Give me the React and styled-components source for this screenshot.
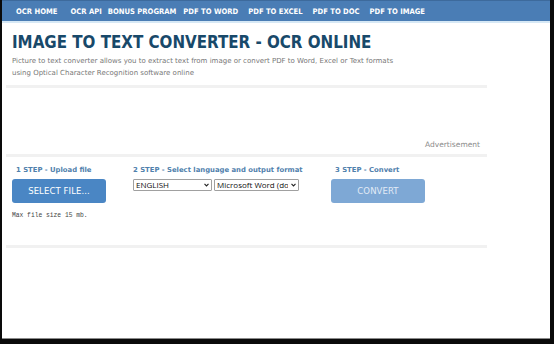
import React from "react";
import styled, { createGlobalStyle } from "styled-components";

const Global = createGlobalStyle`
  html, body { margin: 0; padding: 0; background: #000; }
  body { font-family: "DejaVu Sans", Verdana, sans-serif; }
  * { box-sizing: border-box; }
`;

const Frame = styled.div`
  width: 554px;
  height: 344px;
  background: #0a0a0a;
  padding: 0 4px 5px 2px;
  display: flex;
`;

const Screen = styled.div`
  flex: 1;
  background: #fff;
  border-bottom: 1px solid #8a8a8a;
  display: flex;
  flex-direction: column;
  overflow: hidden;
`;

const Nav = styled.nav`
  height: 23px;
  flex: none;
  background: #4a7db5;
  border-top: 1px solid #3d6a9c;
  border-bottom: 2px solid #d6e8f5;
  display: flex;
  align-items: center;
  padding-left: 14px;
  padding-top: 1px;
`;

const NavLink = styled.a`
  color: #fff;
  font-family: "DejaVu Sans Condensed", "DejaVu Sans", sans-serif;
  font-weight: bold;
  font-size: 7.6px;
  text-decoration: none;
  margin-right: ${(p) => p.$gap || 7}px;
  white-space: nowrap;
`;

const Main = styled.main`
  width: 481px;
  margin-left: 4px;
  display: flex;
  flex-direction: column;
`;

const Header = styled.header`
  padding: 9px 6px 0;
`;

const Title = styled.h1`
  margin: 0;
  font-family: "DejaVu Sans Condensed", "DejaVu Sans", sans-serif;
  font-size: 16.8px;
  line-height: 20px;
  color: #18496a;
  font-weight: bold;
  white-space: nowrap;
`;

const Lead = styled.p`
  margin: 3px 0 0;
  font-size: 7px;
  line-height: 12px;
  color: #777;
  width: 390px;
`;

const AdBox = styled.section`
  margin-top: 6px;
  height: 72px;
  border-top: 3px solid #f1f1f1;
  border-bottom: 3px solid #f1f1f1;
  display: flex;
  align-items: flex-end;
  justify-content: flex-end;
  padding: 0 7px 5px 0;
`;

const AdLabel = styled.span`
  font-size: 7.5px;
  color: #8b8b8b;
`;

const Steps = styled.section`
  height: 91px;
  border-bottom: 3px solid #f1f1f1;
  display: grid;
  grid-template-columns: 121px 198px auto;
  padding: 8px 0 0 6px;
  align-content: start;
`;

const Step = styled.div`
  display: flex;
  flex-direction: column;
`;

const StepLabel = styled.div`
  font-size: 6.85px;
  font-weight: bold;
  color: #4f80ac;
  line-height: 10px;
  padding-left: ${(p) => p.$indent || 0}px;
  white-space: nowrap;
  margin-bottom: 4px;
`;

const Button = styled.button`
  width: 94px;
  height: 24px;
  border: none;
  border-radius: 3px;
  background: ${(p) => (p.$muted ? "#7ea8d5" : "#4a86c4")};
  color: ${(p) => (p.$muted ? "#e2ebf6" : "#fff")};
  font-family: "DejaVu Sans", Verdana, sans-serif;
  font-size: 8.5px;
  letter-spacing: 0.1px;
  cursor: pointer;
`;

const Note = styled.div`
  font-family: "Liberation Mono", monospace;
  font-size: 6.3px;
  color: #444;
  margin-top: 9px;
`;

const SelectRow = styled.div`
  display: flex;
  gap: 2px;
  align-items: flex-start;
`;

const SelectWrap = styled.div`
  position: relative;
  width: ${(p) => p.$w}px;
  height: 12px;
  display: flex;
`;

const Select = styled.select`
  appearance: none;
  -webkit-appearance: none;
  width: 100%;
  height: 12px;
  margin: 0;
  font-family: "Open Sans", "DejaVu Sans", sans-serif;
  font-size: 8px;
  line-height: 10px;
  padding: 0 10px 0 2px;
  border: 1px solid #a0a0a0;
  border-radius: 1px;
  background: #fff;
  color: #111;
  overflow: hidden;
  white-space: nowrap;
`;

const Chevron = styled.svg`
  position: absolute;
  right: 3px;
  top: 50%;
  margin-top: -2px;
  width: 5px;
  height: 4px;
  pointer-events: none;
`;

const navItems = [
  ["OCR HOME", 13],
  ["OCR API", 6],
  ["BONUS PROGRAM", 7],
  ["PDF TO WORD", 10],
  ["PDF TO EXCEL", 10],
  ["PDF TO DOC", 10],
  ["PDF TO IMAGE", 0],
];

function Dropdown({ w, value, children }) {
  return (
    <SelectWrap $w={w}>
      <Select defaultValue={value}>{children}</Select>
      <Chevron viewBox="0 0 5 4">
        <path d="M0.5 0.8 L2.5 2.9 L4.5 0.8" fill="none" stroke="#222" strokeWidth="1.1" />
      </Chevron>
    </SelectWrap>
  );
}

export default function App() {
  return (
    <>
      <Global />
      <Frame>
        <Screen>
          <Nav>
            {navItems.map(([t, g]) => (
              <NavLink key={t} href="#" $gap={g}>
                {t}
              </NavLink>
            ))}
          </Nav>
          <Main>
            <Header>
              <Title>IMAGE TO TEXT CONVERTER - OCR ONLINE</Title>
              <Lead>
                Picture to text converter allows you to extract text from image or convert PDF to Word, Excel or Text formats using Optical Character Recognition software online
              </Lead>
            </Header>
            <AdBox>
              <AdLabel>Advertisement</AdLabel>
            </AdBox>
            <Steps>
              <Step>
                <StepLabel $indent={4}>1 STEP - Upload file</StepLabel>
                <Button>SELECT FILE...</Button>
                <Note>Max file size 15 mb.</Note>
              </Step>
              <Step>
                <StepLabel>2 STEP - Select language and output format</StepLabel>
                <SelectRow>
                  <Dropdown w={79} value="en">
                    <option value="en">ENGLISH</option>
                  </Dropdown>
                  <Dropdown w={85} value="doc">
                    <option value="doc">Microsoft Word (docx)</option>
                  </Dropdown>
                </SelectRow>
              </Step>
              <Step>
                <StepLabel $indent={4}>3 STEP - Convert</StepLabel>
                <Button $muted>CONVERT</Button>
              </Step>
            </Steps>
          </Main>
        </Screen>
      </Frame>
    </>
  );
}
